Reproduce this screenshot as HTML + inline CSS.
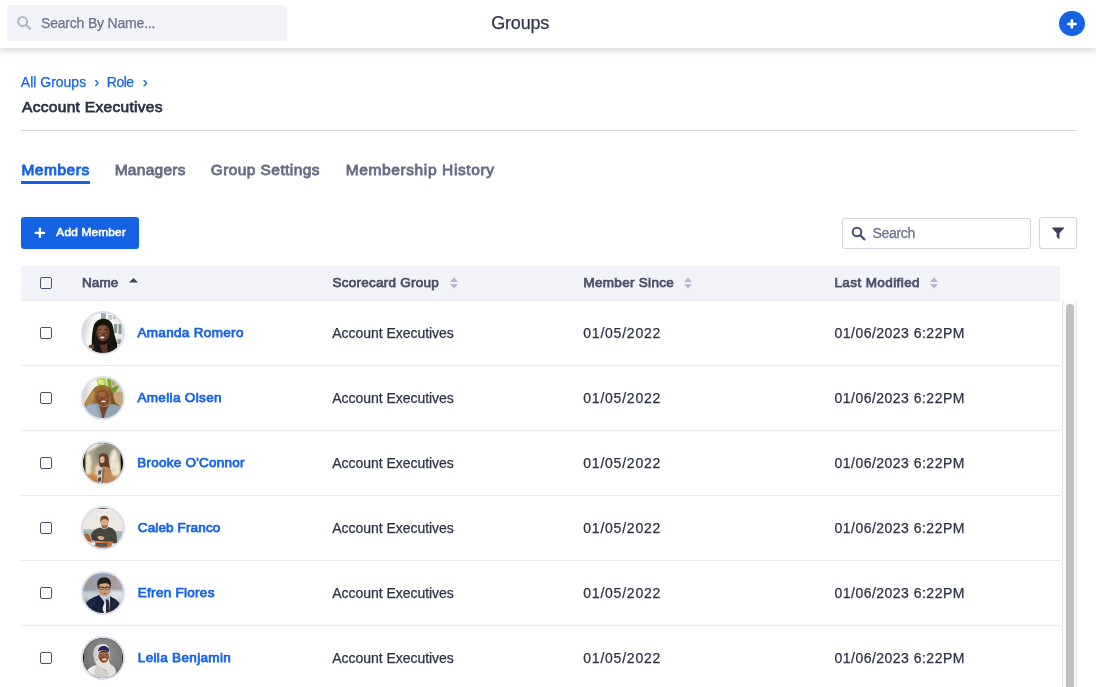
<!DOCTYPE html>
<html lang="en">
<head>
<meta charset="utf-8">
<title>Groups</title>
<style>
*{box-sizing:border-box;margin:0;padding:0}
html,body{width:1096px;height:687px;overflow:hidden;background:#fff}
body{font-family:"Liberation Sans",Arial,sans-serif;color:#2b3245;position:relative;-webkit-text-stroke-width:.25px}
#app{position:absolute;left:0;top:0;width:1096px;height:687px;overflow:hidden;will-change:transform}
.abs{position:absolute;white-space:nowrap}
#hdr{position:absolute;left:0;top:0;width:1096px;height:48px;background:#fff;box-shadow:0 2px 8px rgba(0,0,0,.19);z-index:5}
#hsearch{position:absolute;left:7px;top:5px;width:280px;height:36px;background:#f2f3f9;border-radius:3px}
#hsearch span{position:absolute;left:34px;top:0;line-height:36px;font-size:14px;color:#6d728c;letter-spacing:-.19px}
#title{position:absolute;left:491.3px;top:0;line-height:46px;font-size:18px;color:#2f364b;letter-spacing:-.22px}
#plus{position:absolute;left:1059.4px;top:11.1px;width:25.2px;height:25.2px;border-radius:50%;background:#1662e4}
.bc{top:73px;line-height:18px;font-size:14px;color:#1763e6}
#gname{left:22.1px;top:97px;line-height:20px;font-size:15.5px;color:#2b3245;-webkit-text-stroke:.75px #2d3347;letter-spacing:.3px}
#hr{position:absolute;left:21px;top:130px;width:1056px;height:1px;background:#d6d7e2}
.tab{top:159px;line-height:22px;font-size:15.5px;color:#666c86;-webkit-text-stroke:.8px #666c86}
.tab.on{color:#1662e4;-webkit-text-stroke:.9px #1662e4}
#tabline{position:absolute;left:21px;top:181px;width:69px;height:3px;background:#1662e4}
#addbtn{position:absolute;left:21px;top:217px;width:118px;height:32px;border-radius:3px;background:#1662e4;color:#fff;font-size:11.8px;-webkit-text-stroke:.6px #fff;letter-spacing:.22px}
#addbtn span{position:absolute;left:35.3px;top:0;line-height:31px}
#sbox{position:absolute;left:842px;top:218px;width:189px;height:31px;border:1px solid #d1d4e3;border-radius:3px;background:#fff}
#sbox span{position:absolute;left:29.4px;top:0;line-height:29px;font-size:14px;color:#6b7089;letter-spacing:-.28px}
#fbtn{position:absolute;left:1039px;top:217px;width:38px;height:32px;border:1px solid #d1d4e3;border-radius:3px;background:#fff}
#thead{position:absolute;left:21px;top:266px;width:1039px;height:35px;background:#f2f3f9;border-bottom:1px solid #e9eaf3}
.th{top:266px;line-height:34px;font-size:13.5px;color:#4a5069;-webkit-text-stroke:.75px #4a5069}
.cb{position:absolute;left:40px;width:12px;height:12px;border:1.5px solid #4a506d;border-radius:2px;background:#fff}
.row{position:absolute;left:21px;width:1039px;height:65px;border-bottom:1px solid #e8e9f2}
.row:last-child{border-bottom:none}
.td{position:absolute;top:0;line-height:64px;font-size:14px;color:#2b3245;white-space:nowrap}
.nm{font-size:13.5px;color:#1763e6;-webkit-text-stroke:.75px #1763e6}
.av{position:absolute;left:60px;top:10px;width:44px;height:44px;border-radius:50%;border:2px solid #dcdfee;overflow:hidden;background:#ccc}
.av svg{display:block;width:40px;height:40px}
#strack{position:absolute;left:1062px;top:301px;width:15px;height:386px;background:#fafafa;border-left:1px solid #e8e8e8;border-right:1px solid #e8e8e8}
#sthumb{position:absolute;left:1066px;top:304px;width:8px;height:400px;border-radius:4px;background:#c1c1c1}
</style>
</head>
<body><div id="app">
<div id="hdr">
  <div id="hsearch">
    <svg class="abs" style="left:10px;top:11px" width="15" height="15" viewBox="0 0 15 15"><circle cx="5.6" cy="5.6" r="4.55" fill="none" stroke="#b4b8cb" stroke-width="2.1"/><path d="M9.1 9.1L13.1 12.9" stroke="#b4b8cb" stroke-width="2.3" stroke-linecap="round"/></svg>
    <span>Search By Name...</span>
  </div>
  <div id="title">Groups</div>
  <div id="plus"><svg style="display:block" width="25.2" height="25.2" viewBox="0 0 25.2 25.2"><path d="M12.9 9.3v7.3M9.3 12.9h7.3" stroke="#fff" stroke-width="2.5" stroke-linecap="round"/></svg></div>
</div>
<div class="abs bc" style="left:20.8px">All Groups</div>
<div class="abs bc" style="left:94.4px;top:72.6px;-webkit-text-stroke:.35px #1763e6">›</div>
<div class="abs bc" style="left:106.8px;letter-spacing:-.5px">Role</div>
<div class="abs bc" style="left:142.9px;top:72.6px;-webkit-text-stroke:.35px #1763e6">›</div>
<div class="abs" id="gname">Account Executives</div>
<div id="hr"></div>
<div class="abs tab on" style="left:21.4px;letter-spacing:.53px">Members</div>
<div class="abs tab" style="left:114.7px;letter-spacing:.27px">Managers</div>
<div class="abs tab" style="left:210.7px;letter-spacing:.42px">Group Settings</div>
<div class="abs tab" style="left:345.7px;letter-spacing:.62px">Membership History</div>
<div id="tabline"></div>
<div id="addbtn"><svg class="abs" style="left:13px;top:10px" width="12" height="12" viewBox="0 0 12 12"><path d="M5.9 1.7v8.4M1.7 5.9h8.4" stroke="#fff" stroke-width="2.3" stroke-linecap="round"/></svg><span>Add Member</span></div>
<div id="sbox"><svg class="abs" style="left:8px;top:7px" width="15" height="15" viewBox="0 0 15 15"><circle cx="6" cy="6" r="4.3" fill="none" stroke="#4a5069" stroke-width="2"/><path d="M9.3 9.3L13.4 13.4" stroke="#4a5069" stroke-width="2.2" stroke-linecap="round"/></svg><span>Search</span></div>
<div id="fbtn"><svg class="abs" style="left:11.8px;top:8.8px" width="12.2" height="12.2" viewBox="0 0 13 13"><path d="M0.6 0.5h11.8c.5 0 .7.5.4.9L8 6.6v5.6c0 .4-.4.6-.7.4L5.3 11c-.2-.1-.3-.3-.3-.5V6.6L.2 1.4C-.1 1 .1.5.6.5z" fill="#3b425c"/></svg></div>
<div id="thead"></div>
<div class="cb" style="top:277px;background:transparent"></div>
<div class="abs th" style="left:82px;letter-spacing:.07px">Name</div>
<svg class="abs" style="left:129px;top:278px" width="9" height="5" viewBox="0 0 9 5"><path d="M4.5 0L9 4.6H0z" fill="#3d4460"/></svg>
<div class="abs th" style="left:332.4px;letter-spacing:.26px">Scorecard Group</div>
<svg class="abs" style="left:450px;top:277px" width="8" height="12" viewBox="0 0 8 12"><path d="M4 .6L8 5H0zM4 11.6L8 7.2H0z" fill="#b4b7cb"/></svg>
<div class="abs th" style="left:583.5px;letter-spacing:.29px">Member Since</div>
<svg class="abs" style="left:684px;top:277px" width="8" height="12" viewBox="0 0 8 12"><path d="M4 .6L8 5H0zM4 11.6L8 7.2H0z" fill="#b4b7cb"/></svg>
<div class="abs th" style="left:834.4px;letter-spacing:.41px">Last Modified</div>
<svg class="abs" style="left:930px;top:277px" width="8" height="12" viewBox="0 0 8 12"><path d="M4 .6L8 5H0zM4 11.6L8 7.2H0z" fill="#b4b7cb"/></svg>
<div id="rows">
<div class="row" style="top:301px"><div class="cb" style="left:19px;top:26px"></div><div class="av"><svg viewBox="0 0 40 40"><defs><linearGradient id="a1g" x1="0" x2="1" y1="0" y2=".25"><stop offset="0" stop-color="#c4c4c2"/><stop offset=".28" stop-color="#f6f6f4"/><stop offset=".55" stop-color="#fdfdfc"/><stop offset="1" stop-color="#e6e9e4"/></linearGradient><filter id="a1b" x="-20%" y="-20%" width="140%" height="140%"><feGaussianBlur stdDeviation=".7"/></filter></defs><rect width="40" height="40" fill="url(#a1g)"/><g filter="url(#a1b)"><rect x="18" y="0" width="5" height="6" fill="#a3aca8"/><rect x="25" y="2" width="4" height="5" fill="#c4d2cd"/><rect x="30" y="3" width="3" height="3" fill="#b4c2bd"/><rect x="31" y="11" width="3.2" height="9" fill="#8d9c96"/><rect x="35.5" y="11" width="3" height="10" fill="#87958f"/><rect x="34.5" y="26" width="3.5" height="5" fill="#8fa097"/><path d="M9.5 40C8.5 31 8.6 21 10.4 14C12.5 7 18 5.2 22 6C27.5 6.5 30 11 30.6 17C31.2 22 33.2 27 34.3 31L33 40z" fill="#17120f"/><ellipse cx="20" cy="19.6" rx="6.7" ry="8.7" fill="#643b2a"/><ellipse cx="19" cy="16.4" rx="4.2" ry="3.6" fill="#8d5940"/><ellipse cx="17.2" cy="21.6" rx="2" ry="1.8" fill="#80503a"/><ellipse cx="23.2" cy="21.4" rx="1.6" ry="1.6" fill="#774733"/><path d="M13.2 12.5C16 9.4 23 9.4 27 13.4C24 11 17 11 13.2 12.5z" fill="#17120f"/><path d="M15.4 16.6H18.4M21 16.6H24" stroke="#2a1a14" stroke-width=".8"/><ellipse cx="19.2" cy="24.6" rx="2.4" ry="1" fill="#efe2da"/><path d="M5.5 33C7 31.5 9 31 10.5 31.3L12 36L6 35z" fill="#6d412e"/><path d="M10 40L12 31C14 30 15 30 16 30.5C18 33 22 33 25 28L34 33L35 40z" fill="#141416"/><path d="M16.5 31C18 36 19 38 20 40H25C24 36 24 32 24.5 29.5C22 32 19 32.5 16.5 31z" fill="#5a3424"/></g></svg></div><div class="td nm" style="left:116.4px;letter-spacing:0.33px">Amanda Romero</div><div class="td" style="left:311.3px;letter-spacing:-.04px">Account Executives</div><div class="td" style="left:562.3px;letter-spacing:.77px">01/05/2022</div><div class="td" style="left:813.5px;letter-spacing:.48px">01/06/2023 6:22PM</div></div>
<div class="row" style="top:366px"><div class="cb" style="left:19px;top:26px"></div><div class="av"><svg viewBox="0 0 40 40"><defs><linearGradient id="a2g" x1="0" x2="1" y1="0" y2="0"><stop offset="0" stop-color="#d9d3c8"/><stop offset=".25" stop-color="#f6f4ee"/><stop offset=".5" stop-color="#f1eee2"/><stop offset="1" stop-color="#cbb692"/></linearGradient><filter id="a2b" x="-20%" y="-20%" width="140%" height="140%"><feGaussianBlur stdDeviation=".6"/></filter></defs><rect width="40" height="40" fill="url(#a2g)"/><g filter="url(#a2b)"><path d="M13 0H22L24 6L21 10L15 8z" fill="#b5d24f"/><path d="M14 1L20 2L21 7L16 6z" fill="#dbe88a"/><path d="M24 1H28L29 12L26 14z" fill="#7fa838"/><path d="M28 10L36 7L33 14L30 19L27 17z" fill="#6f9a30"/><rect x="28.5" y="2" width="4" height="6" fill="#b8a88a"/><path d="M31 14H40V30H31z" fill="#c2a67c"/><path d="M1 27C3 22 6 17 9 13C11 9 15 7 19.5 7C24 7 27.5 9.5 29 13C30.5 17 31 21 32.5 24C34 26 36.5 27.5 38 30L30 34L8 32z" fill="#9a6c36"/><path d="M2 26.5C5 20 8 15 11 11.5C12 14 11 19 10 23L7 27.5z" fill="#b98a4c"/><path d="M27 11C30 16 30.5 22 32 25C34 27 36 28 37.5 30L29 31z" fill="#7d4f24"/><ellipse cx="19.8" cy="19.6" rx="6.7" ry="8.2" fill="#7f492c"/><ellipse cx="19" cy="16.2" rx="4" ry="2.8" fill="#a0653f"/><ellipse cx="23.6" cy="20.5" rx="1.7" ry="1.5" fill="#96593a"/><ellipse cx="16" cy="20.5" rx="1.5" ry="1.4" fill="#8f5537"/><path d="M12.8 16C13.5 10.5 25.5 10 27 16C24 12.2 16 12.2 12.8 16z" fill="#8a5a28"/><ellipse cx="20.6" cy="23.4" rx="2.4" ry=".95" fill="#f3e8e0"/><path d="M0 30C3 26.5 8 25.5 12 25.5L17 27C19 30 22 30 24 27L30 26C35 27 38 29 40 32V40H0z" fill="#8ea2b4"/><path d="M3 30C6 27 10 26.5 13 27L16 40H2z" fill="#9db1c2"/><path d="M15.5 27C17.5 32 18.5 36 19 40H21C22 35 24.5 30 26.5 26.5C23 29.8 19 29.8 15.5 27z" fill="#75442a"/></g></svg></div><div class="td nm" style="left:116.4px;letter-spacing:0.35px">Amelia Olsen</div><div class="td" style="left:311.3px;letter-spacing:-.04px">Account Executives</div><div class="td" style="left:562.3px;letter-spacing:.77px">01/05/2022</div><div class="td" style="left:813.5px;letter-spacing:.48px">01/06/2023 6:22PM</div></div>
<div class="row" style="top:431px"><div class="cb" style="left:19px;top:26px"></div><div class="av"><svg viewBox="0 0 40 40"><defs><linearGradient id="a3g" x1="0" x2="0" y1="0" y2="1"><stop offset="0" stop-color="#b0aa98"/><stop offset=".45" stop-color="#a39a82"/><stop offset=".7" stop-color="#c2a67c"/><stop offset="1" stop-color="#c58244"/></linearGradient><filter id="a3b" x="-20%" y="-20%" width="140%" height="140%"><feGaussianBlur stdDeviation="1.2"/></filter><filter id="a3c" x="-20%" y="-20%" width="140%" height="140%"><feGaussianBlur stdDeviation=".5"/></filter></defs><rect width="40" height="40" fill="#0a0806"/><rect x="2.6" y="0" width="35" height="40" fill="url(#a3g)"/><g filter="url(#a3b)"><path d="M2.6 0H22C15 2 9 6 2.6 11z" fill="#faf6ec"/><path d="M15 3C21 0 28 1 33 6C35 10 35 15 33 19H15C11 14 11 8 15 3z" fill="#8b8976"/><path d="M3 12C6 9 8.5 12 8 16C9.5 19 9 22 7.5 25C8.5 28 7.5 31 5 33L2.6 34V12z" fill="#efe4cc"/><path d="M30 6.5C33 5.5 35 10 34.5 14C37 18 37.4 24 37 30C36 33 33 34 30 32C27 30 26.5 26 27 22C26 17 27 11 30 6.5z" fill="#f1e6d0"/><circle cx="33" cy="18" r="1.8" fill="#d6c4a0"/><circle cx="31" cy="27" r="1.8" fill="#dcc9a4"/><path d="M12.5 25C13.5 21 16.5 21 17.5 25V32H12.5z" fill="#ebdec4"/><path d="M2.6 32C8 30 12 32 15 34V40H2.6z" fill="#cc8444"/><path d="M26 35C30 33 34 35 37.4 34V40H26z" fill="#c98c4e"/></g><g filter="url(#a3c)"><path d="M16.3 12.5C17.5 9.6 23 9.4 24.8 12.5C26 16 25.8 21 27 25.5L24 27.5L17.3 25.5C16.5 21 15.3 16.5 16.3 12.5z" fill="#5e3c2a"/><ellipse cx="19.2" cy="16.4" rx="2.4" ry="3.5" fill="#dfb59a"/><path d="M16.6 14.5C17.3 11.6 20.5 11.2 22.5 13C20 12.8 18.5 13.3 16.6 14.5z" fill="#5e3c2a"/><path d="M18 24.5C21 22.5 26 23.5 28 27C29 31 28.6 36 28 40H16.5C17 35 17 29 18 24.5z" fill="#bb875a"/><path d="M22 25L20 40H17L19.5 26z" fill="#9a6a42"/><path d="M15.5 25C17 23.5 19 24 19.5 25.5L18.5 40H14C14 35 14.5 29 15.5 25z" fill="#c9cccc"/><path d="M15.5 28L18.5 27L18 31L15 32zM15 35L18 34L18 38L14.5 39z" fill="#4a4e54"/></g></svg></div><div class="td nm" style="left:116.3px;letter-spacing:0.23px">Brooke O'Connor</div><div class="td" style="left:311.3px;letter-spacing:-.04px">Account Executives</div><div class="td" style="left:562.3px;letter-spacing:.77px">01/05/2022</div><div class="td" style="left:813.5px;letter-spacing:.48px">01/06/2023 6:22PM</div></div>
<div class="row" style="top:496px"><div class="cb" style="left:19px;top:26px"></div><div class="av"><svg viewBox="0 0 40 40"><defs><filter id="a4b" x="-20%" y="-20%" width="140%" height="140%"><feGaussianBlur stdDeviation=".55"/></filter></defs><rect width="40" height="40" fill="#ebe9e1"/><g filter="url(#a4b)"><rect x="13" y="-1" width="11.5" height="1.8" fill="#2c2a26"/><path d="M0 21H12V34H0zM30 23H40V36H30z" fill="#a3b5b4"/><path d="M0 21H12V23H0z" fill="#b9c8c6"/><path d="M17.3 12C17 9 19 7.6 21.5 7.8C24.5 8 26 10 25.6 13L25 16H17.8z" fill="#7c4a2a"/><ellipse cx="21.5" cy="14.6" rx="3.7" ry="4.9" fill="#d8a88c"/><path d="M17.6 12.5C18 9.5 20 8.4 22 8.6C24.3 8.8 25.6 10.2 25.4 12.6C23.5 10.8 20 10.6 17.6 12.5z" fill="#75431f"/><path d="M18.2 16.5C19.5 18 23.5 18 24.9 16.5C25 19 23.5 20.6 21.5 20.6C19.5 20.6 18.1 19 18.2 16.5z" fill="#9a6848"/><path d="M8 27C9 23 13 20.5 17.5 19.5C20 21.5 23 21.5 25.5 19C30 20 33 22.5 33.5 27L34 35H26L22 34L12 33z" fill="#46443c"/><path d="M8 27C10 29 13 30 16 30L15 33L9 32z" fill="#3c3a33"/><path d="M14.5 28.5C16.5 27.5 19.5 27.8 21 29C22 30.5 20.5 32 18.5 32C16.5 32.3 14.5 31 14.5 28.5z" fill="#d9a98c"/><path d="M0.8 25.5L6 26.5L8.5 33L3 33z" fill="#9a5426"/><path d="M1.5 26L5.5 27L7.5 32L3.5 32z" fill="#b3642e"/><path d="M7 33.5H30L28 40H10z" fill="#c87838"/><path d="M12 35H25L24 38.5H14z" fill="#5a5458"/><ellipse cx="10.2" cy="35.6" rx="2.2" ry="1.8" fill="#f2f2f0"/></g></svg></div><div class="td nm" style="left:116.8px;letter-spacing:0.13px">Caleb Franco</div><div class="td" style="left:311.3px;letter-spacing:-.04px">Account Executives</div><div class="td" style="left:562.3px;letter-spacing:.77px">01/05/2022</div><div class="td" style="left:813.5px;letter-spacing:.48px">01/06/2023 6:22PM</div></div>
<div class="row" style="top:561px"><div class="cb" style="left:19px;top:26px"></div><div class="av"><svg viewBox="0 0 40 40"><defs><linearGradient id="a5g" x1="0" x2="0" y1="0" y2="1"><stop offset="0" stop-color="#95a2b8"/><stop offset=".35" stop-color="#9aa2b2"/><stop offset=".55" stop-color="#cdd3da"/><stop offset=".8" stop-color="#c3cbd2"/><stop offset="1" stop-color="#aab4b8"/></linearGradient><filter id="a5b" x="-20%" y="-20%" width="140%" height="140%"><feGaussianBlur stdDeviation="1.2"/></filter><filter id="a5c" x="-20%" y="-20%" width="140%" height="140%"><feGaussianBlur stdDeviation=".5"/></filter></defs><rect width="40" height="40" fill="url(#a5g)"/><g filter="url(#a5b)"><rect x="4" y="4" width="8" height="12" fill="#a8968c"/><rect x="10" y="2" width="4" height="13" fill="#8fa0b8"/><rect x="27" y="2" width="9" height="14" fill="#ad9894"/><rect x="33" y="8" width="7" height="10" fill="#a8a4ac"/><rect x="0" y="14" width="14" height="4" fill="#8f9cb0"/><rect x="0" y="19" width="14" height="6" fill="#c4ccd6"/><rect x="28" y="18" width="12" height="8" fill="#dfe3e6"/><rect x="0" y="26" width="5" height="4" fill="#9eb07a"/></g><g filter="url(#a5c)"><path d="M14.5 13C13.5 8 16 4.3 21 4.2C26 4 28.5 7 27.8 13L27 16H15.2z" fill="#26201e"/><ellipse cx="21.4" cy="15.8" rx="5.9" ry="7.8" fill="#c99878"/><path d="M15 12.5C15.5 8.5 18 6.5 21.5 6.6C25 6.7 27.5 8.5 27.6 12C25 9.6 18.5 9.4 15 12.5z" fill="#26201e"/><ellipse cx="20.5" cy="12.6" rx="3.2" ry="1.8" fill="#d7a98a"/><path d="M15.6 14H27.2V14.7H15.6z" fill="#3a2e2a"/><rect x="16.2" y="13.7" width="4.4" height="2.8" rx="1" fill="none" stroke="#3a2e2a" stroke-width=".5"/><rect x="22.2" y="13.7" width="4.4" height="2.8" rx="1" fill="none" stroke="#3a2e2a" stroke-width=".5"/><ellipse cx="22" cy="20.4" rx="1.7" ry=".7" fill="#9a5a4a"/><path d="M3 30C5 26.5 10 24.5 16 22L21 30L26 23.5C30 24.5 34 26.5 36.5 30L35 40H5z" fill="#1c2744"/><path d="M16.5 22.5C18 25 20 27 22 27.5C24 27 25.5 25 26.3 23.2L29 26L27.5 40H21L17 28z" fill="#e6eaf3"/><path d="M16 22L21.5 29L18 40H10L13 26z" fill="#18223c"/><path d="M22.5 26.5H25.5L26 29L26.8 40H23L23 29z" fill="#2a2a30"/><path d="M27 23L31 26L29 40H26.5z" fill="#1a243f"/></g></svg></div><div class="td nm" style="left:116.8px;letter-spacing:0.28px">Efren Flores</div><div class="td" style="left:311.3px;letter-spacing:-.04px">Account Executives</div><div class="td" style="left:562.3px;letter-spacing:.77px">01/05/2022</div><div class="td" style="left:813.5px;letter-spacing:.48px">01/06/2023 6:22PM</div></div>
<div class="row" style="top:626px"><div class="cb" style="left:19px;top:26px"></div><div class="av"><svg viewBox="0 0 40 40"><defs><radialGradient id="a6g" cx=".55" cy=".4" r=".7"><stop offset="0" stop-color="#8e8e8e"/><stop offset=".6" stop-color="#7c7c7c"/><stop offset="1" stop-color="#6a6a6a"/></radialGradient><filter id="a6b" x="-20%" y="-20%" width="140%" height="140%"><feGaussianBlur stdDeviation=".55"/></filter></defs><rect width="40" height="40" fill="#0c0c0c"/><rect x="1" y="0" width="38.2" height="40" fill="url(#a6g)"/><g filter="url(#a6b)"><path d="M10.5 17C10 10 14 6 20 6C24.5 6 26.6 9 26.6 14C26.6 19 26.4 24 25 27L16 28C12 26 11 22 10.5 17z" fill="#e3e1dc"/><path d="M10.5 17C10.5 11 13 7.5 16 6.8C14 10 13.5 16 14.5 22L13 25C11.5 23 10.8 20 10.5 17z" fill="#cfcdc8"/><path d="M15 13.5C15 10 17.5 8 20.5 8C23.5 8 26 9.5 26.2 12.5L25.8 14C23 11.8 18 11.8 15 13.5z" fill="#1e2b5c"/><ellipse cx="20.7" cy="18.3" rx="5.3" ry="6.4" fill="#8a5030"/><ellipse cx="20" cy="15.2" rx="3.2" ry="1.7" fill="#a3643e"/><path d="M15.3 15C17 12.5 24 12.3 26.2 14.5C24 13.6 18 13.7 15.3 15z" fill="#1e2b5c"/><path d="M15.6 16.2H26V16.9H15.6z" fill="#6a4028" opacity=".7"/><ellipse cx="18.2" cy="17" rx="2.1" ry="1.5" fill="none" stroke="#c8b8b0" stroke-width=".4" opacity=".8"/><ellipse cx="23.4" cy="17" rx="2.1" ry="1.5" fill="none" stroke="#c8b8b0" stroke-width=".4" opacity=".8"/><path d="M18.6 21C20 22.6 22.8 22.4 24 20.6C23.5 21 19.8 21.4 18.6 21z" fill="#f4ece6"/><ellipse cx="21.3" cy="21.4" rx="2.2" ry=".9" fill="#f1e7e0"/><path d="M20 23.3C21.5 23.8 23 23.2 23.8 22.5L23 24.6H20z" fill="#a6503c"/><path d="M4 33C6 29.5 10 28 14 26.5C15 24 15.5 22 15.8 20.5C16.5 23.5 18.5 25.3 21 25.3C23 25.3 24.8 24 25.6 22C26 24 27 26 28.5 27C31 28 32.5 31 33 34L31.5 40H6z" fill="#e4e2de"/><path d="M14 27C17 29 21 31 26 35L24 40H12C11 35 12 30 14 27z" fill="#d2d0cb"/><path d="M4 33C6 30 9 28.5 12 27.8C10 31 9 36 10 40H6z" fill="#efeeea"/><path d="M19 30L24 33.5" stroke="#b08a7a" stroke-width=".5"/></g></svg></div><div class="td nm" style="left:116.8px;letter-spacing:0.34px">Leila Benjamin</div><div class="td" style="left:311.3px;letter-spacing:-.04px">Account Executives</div><div class="td" style="left:562.3px;letter-spacing:.77px">01/05/2022</div><div class="td" style="left:813.5px;letter-spacing:.48px">01/06/2023 6:22PM</div></div>
</div>
<div id="strack"></div>
<div id="sthumb"></div>
</div></body>
</html>
